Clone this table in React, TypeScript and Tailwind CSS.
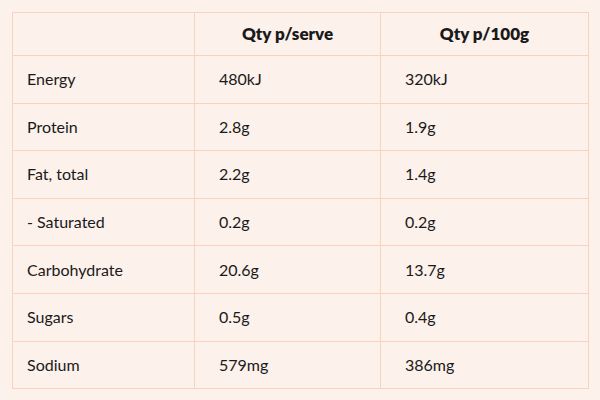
const rows: [string, string, string][] = [
  ['Energy', '480kJ', '320kJ'],
  ['Protein', '2.8g', '1.9g'],
  ['Fat, total', '2.2g', '1.4g'],
  ['- Saturated', '0.2g', '0.2g'],
  ['Carbohydrate', '20.6g', '13.7g'],
  ['Sugars', '0.5g', '0.4g'],
  ['Sodium', '579mg', '386mg'],
];

export default function App() {
  return (
    <div className="w-[600px] h-[400px] bg-[#fdf1eb] p-3 font-['Lato',sans-serif] text-[#1a1a1a]">
      <table className="w-[576px] border-collapse table-fixed text-[16px]">
        <colgroup>
          <col className="w-[182px]" />
          <col className="w-[186px]" />
          <col className="w-[208px]" />
        </colgroup>
        <thead>
          <tr className="h-[43px]">
            <th className="border border-[#fbd3bd]"></th>
            <th className="border border-[#fbd3bd] font-extrabold text-[17px] text-center">Qty p/serve</th>
            <th className="border border-[#fbd3bd] font-extrabold text-[17px] text-center">Qty p/100g</th>
          </tr>
        </thead>
        <tbody>
          {rows.map(([name, serve, per100]) => (
            <tr key={name} className="h-[47.6px]">
              <td className="border border-[#fbd3bd] pl-3.5">{name}</td>
              <td className="border border-[#fbd3bd] pl-6">{serve}</td>
              <td className="border border-[#fbd3bd] pl-6">{per100}</td>
            </tr>
          ))}
        </tbody>
      </table>
    </div>
  );
}
